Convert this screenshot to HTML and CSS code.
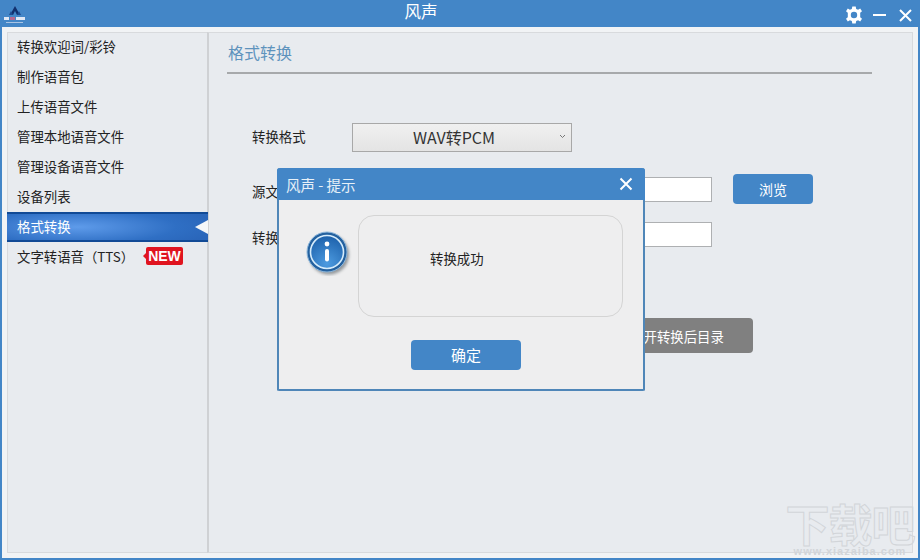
FILE: index.html
```html
<!DOCTYPE html>
<html lang="zh-CN">

<head>
    <meta charset="UTF-8">
    <title>风声</title>
    <link rel="stylesheet" href="styles.css">
</head>

<body>
    <div class="app">
        <header class="titlebar">
            <svg class="logo" width="28" height="24" viewBox="0 0 28 24">
                <path d="M14 4 L19 13 L16 13 L14 9 L12 13 L9 13 Z" fill="#12306e"/>
                <path d="M10 9 L12 13 L8 13 Z" fill="#1d4a8f"/>
                <path d="M18 9 L20 13 L16 13 Z" fill="#1d4a8f"/>
                <rect x="3" y="15" width="5" height="3" fill="#dfe8f5"/>
                <rect x="9" y="15" width="5" height="3" fill="#b5688f"/>
                <rect x="15" y="15" width="9" height="3" fill="#dfe8f5"/>
                <rect x="5" y="20" width="17" height="1" fill="#a9c4e4"/>
            </svg>
            <h1 class="app-title">风声</h1>
            <div class="win-controls">
                <svg width="18" height="18" viewBox="0 0 18 18">
                    <path d="M7.300 0.500 H10.700 L11.200 2.900 L13.100 3.700 L15.200 2.400 L17 5.300 L15.200 6.800 V9 V11.200 L17 12.700 L15.200 15.600 L13.100 14.300 L11.200 15.100 L10.700 17.500 H7.300 L6.800 15.100 L4.900 14.300 L2.800 15.600 L1 12.700 L2.800 11.200 V6.800 L1 5.300 L2.800 2.400 L4.900 3.700 L6.800 2.900 Z M9 5.800 A3.200 3.200 0 1 0 9 12.200 A3.200 3.200 0 1 0 9 5.800 Z" fill="#fff" fill-rule="evenodd"/>
                </svg>
                <span class="win-min"></span>
                <svg class="win-close" width="13" height="13" viewBox="0 0 13 13">
                    <path d="M1 1 L12 12 M12 1 L1 12" stroke="#fff" stroke-width="2"/>
                </svg>
            </div>
        </header>

        <div class="frame">
            <nav class="sidebar">
                <a class="nav-item">转换欢迎词/彩铃</a>
                <a class="nav-item">制作语音包</a>
                <a class="nav-item">上传语音文件</a>
                <a class="nav-item">管理本地语音文件</a>
                <a class="nav-item">管理设备语音文件</a>
                <a class="nav-item">设备列表</a>
                <a class="nav-item active">格式转换</a>
                <a class="nav-item">文字转语音（TTS）<span class="badge-new">NEW</span></a>
            </nav>

            <main class="content">
                <h2 class="page-title">格式转换</h2>
                <div class="form">
                    <div class="row row-format">
                        <label>转换格式</label>
                        <div class="select">WAV转PCM
                            <svg class="chevron" width="7" height="5" viewBox="0 0 7 5">
                                <path d="M1 1 L3.500 3.500 L6 1" fill="none" stroke="#777" stroke-width="1"/>
                            </svg>
                        </div>
                    </div>
                    <div class="row row-source">
                        <label>源文件路径</label>
                        <input class="field" type="text">
                        <button class="btn-blue btn-browse">浏览</button>
                    </div>
                    <div class="row row-target">
                        <label>转换后路径</label>
                        <input class="field" type="text">
                    </div>
                    <div class="actions">
                        <button class="btn-gray">打开转换后目录</button>
                    </div>
                </div>
            </main>
        </div>

        <section class="dialog">
            <div class="dialog-head">
                <span>风声 - 提示</span>
                <svg width="14" height="14" viewBox="0 0 14 14">
                    <path d="M1.500 1.500 L12.500 12.500 M12.500 1.500 L1.500 12.500" stroke="#fff" stroke-width="2"/>
                </svg>
            </div>
            <div class="dialog-body">
                <svg class="info-icon" width="46" height="46" viewBox="0 0 46 46">
                    <defs>
                        <radialGradient id="infoFill" cx="50%" cy="85%" r="80%">
                            <stop offset="0" stop-color="#4d9be0"/>
                            <stop offset="1" stop-color="#1f64ae"/>
                        </radialGradient>
                        <filter id="infoShadow" x="-20%" y="-20%" width="140%" height="140%">
                            <feGaussianBlur stdDeviation="1.500"/>
                        </filter>
                    </defs>
                    <circle cx="23" cy="24.500" r="20" fill="#4b5259" opacity="0.55" filter="url(#infoShadow)"/>
                    <circle cx="21" cy="22" r="20" fill="#24619f"/>
                    <circle cx="21" cy="22" r="20" fill="none" stroke="#8fb8dc" stroke-width="1"/>
                    <circle cx="21" cy="22" r="16.500" fill="url(#infoFill)" stroke="#d6ecfb" stroke-width="1.600"/>
                    <circle cx="21" cy="14" r="2.400" fill="#fff"/>
                    <rect x="19" y="19" width="4" height="12.500" rx="2" fill="#fff"/>
                </svg>
                <div class="message">转换成功</div>
            </div>
            <div class="dialog-foot">
                <button class="btn-blue btn-ok">确定</button>
            </div>
        </section>

        <div class="watermark">
            <div class="wm-logo">下载吧</div>
            <div class="wm-url">www.xiazaiba.com</div>
        </div>
    </div>
</body>

</html>
```

FILE: styles.css
```css
html, body {
    margin: 0;
    padding: 0;
}

body {
    font-family: "Noto Sans CJK SC", "Liberation Sans", sans-serif;
    font-size: 13.4px;
    color: #222;
}

.app {
    position: relative;
    width: 920px;
    height: 560px;
    overflow: hidden;
    display: flex;
    flex-direction: column;
    background-color: #4386c7;
}

.titlebar {
    height: 27px;
    flex: none;
    display: flex;
    align-items: center;
    justify-content: center;
    position: relative;
    color: #fff;
}

.logo {
    position: absolute;
    left: 1px;
    top: 2px;
}

.app-title {
    margin: 0 78px 6px 0;
    font-size: 16.5px;
    font-weight: normal;
    line-height: 20px;
}

.win-controls {
    position: absolute;
    right: 8px;
    top: 6px;
    display: flex;
    align-items: center;
    gap: 10px;
}

.win-min {
    width: 13px;
    height: 2px;
    background-color: #fff;
}

.win-close {
    margin-left: 3px;
}

.frame {
    flex: 1;
    display: flex;
    margin: 0 2px 2px;
    padding: 5px;
    background-color: #f1f3f5;
    min-height: 0;
}

.sidebar {
    width: 199px;
    flex: none;
    background-color: #e8ebef;
    border: 1px solid #d8dadd;
    border-right: none;
    display: flex;
    flex-direction: column;
}

.nav-item {
    box-sizing: border-box;
    height: 30px;
    padding-left: 9px;
    padding-bottom: 2px;
    white-space: nowrap;
    display: flex;
    align-items: center;
    color: #222;
}

.nav-item:first-child {
    margin-top: -1px;
}

.nav-item.active {
    position: relative;
    margin-left: -1px;
    margin-right: -1px;
    padding-left: 10px;
    color: #fff;
    background: radial-gradient(ellipse 70% 90% at 35% 50%, #5e9bea, #2f6fc4 70%, #2a66ba);
    border-top: 2px solid #114a96;
    border-bottom: 2px solid #114a96;
}

.nav-item.active::after {
    content: "";
    position: absolute;
    right: 0;
    top: 6px;
    border-style: solid;
    border-width: 7px 13px 7px 0;
    border-color: transparent #f4f6f8 transparent transparent;
}

.badge-new {
    position: relative;
    margin-left: 12px;
    padding: 0 2px;
    height: 18px;
    line-height: 18px;
    background-color: #e0141f;
    color: #fff;
    font-family: "Liberation Sans", sans-serif;
    font-size: 14px;
    font-weight: bold;
    border-radius: 2px;
}

.badge-new::before {
    content: "";
    position: absolute;
    left: -3px;
    top: 6px;
    border-style: solid;
    border-width: 3px 3px 3px 0;
    border-color: transparent #e0141f transparent transparent;
}

.content {
    flex: 1;
    background-color: #e8ebef;
    border: 1px solid #d8dadd;
    border-left: 2px solid #cfd1d4;
    padding: 0 40px 0 18px;
    min-width: 0;
}

.page-title {
    margin: 0;
    height: 39px;
    padding-left: 1px;
    line-height: 38px;
    font-size: 16px;
    font-weight: normal;
    color: #5e93bd;
    border-bottom: 2px solid #a7a9ab;
}

.form {
    padding: 49px 0 0 25px;
}

.row {
    display: flex;
    align-items: center;
}

.row label {
    width: 100px;
    flex: none;
    padding-top: 4px;
}

.row-format label {
    padding-top: 0;
    padding-bottom: 4px;
}

.row-format {
    height: 29px;
}

.row-source {
    margin-top: 22px;
    height: 30px;
}

.row-target {
    margin-top: 18px;
    height: 25px;
}

.select {
    position: relative;
    width: 218px;
    height: 27px;
    line-height: 26px;
    text-align: center;
    font-size: 16px;
    color: #333;
    background: linear-gradient(#f0f0f0, #e4e4e4);
    border: 1px solid #a8a8a8;
    box-sizing: content-box;
    text-indent: -16px;
}

.chevron {
    position: absolute;
    right: 5px;
    top: 10px;
}

.field {
    width: 358px;
    height: 23px;
    padding: 0;
    background-color: #fff;
    border: 1px solid #aeb0b2;
}

.btn-blue {
    border: none;
    border-radius: 4px;
    background-color: #4386c7;
    color: #fff;
    font-family: inherit;
    padding: 0;
}

.btn-browse {
    width: 80px;
    height: 30px;
    margin-left: 21px;
    font-size: 14px;
}

.actions {
    margin-top: 71px;
    padding-left: 345px;
}

.btn-gray {
    width: 156px;
    height: 35px;
    border: none;
    border-radius: 4px;
    background-color: #808080;
    color: #fff;
    font-family: inherit;
    font-size: 13.4px;
    padding: 0 0 0 4px;
}

.dialog {
    position: absolute;
    left: 277px;
    top: 168px;
    width: 368px;
    height: 223px;
    box-sizing: border-box;
    background-color: #eeeeef;
    border: 2px solid #4f86b8;
    border-top: none;
    border-radius: 3px 3px 2px 2px;
    display: flex;
    flex-direction: column;
}

.dialog-head {
    height: 32px;
    flex: none;
    margin: 0 -2px;
    padding: 0 12px 0 9px;
    background-color: #4386c7;
    color: #e8f1f8;
    border-radius: 3px 3px 0 0;
    font-size: 14.5px;
    display: flex;
    align-items: center;
    justify-content: space-between;
}

.dialog-body {
    display: flex;
    margin: 15px 20px 0 27px;
    position: relative;
    height: 102px;
}

.info-icon {
    flex: none;
    margin-top: 15px;
    margin-right: 6px;
}

.message {
    flex: 1;
    box-sizing: border-box;
    border: 1px solid #d4d4d4;
    border-radius: 16px;
    padding: 32px 0 0 71px;
    line-height: 20px;
}

.dialog-foot {
    display: flex;
    justify-content: center;
    margin-top: 23px;
    padding-left: 10px;
}

.btn-ok {
    width: 110px;
    height: 30px;
    font-size: 15px;
    padding-bottom: 2px;
}

.watermark {
    position: absolute;
    right: 0;
    top: 501px;
    width: 140px;
    text-align: center;
    pointer-events: none;
}

.wm-logo {
    font-size: 44px;
    line-height: 44px;
    font-weight: bold;
    letter-spacing: -1px;
    white-space: nowrap;
    color: transparent;
    -webkit-text-stroke: 1px #d2d5d9;
}

.wm-url {
    font-family: "Liberation Sans", sans-serif;
    font-size: 11px;
    font-weight: bold;
    line-height: 12px;
    color: #d2d5d9;
    letter-spacing: 1px;
}
```
